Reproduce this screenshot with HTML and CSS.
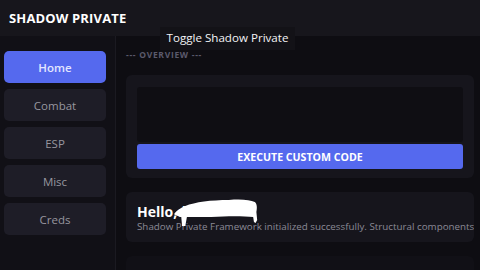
FILE: index.html
```html
<!DOCTYPE html>
<html>
  <head>
    <title>Shadow Private</title>
    <link rel="stylesheet" href="styles.css">
  </head>
  <body>
    <header class="topbar">
      <span class="brand">SHADOW PRIVATE</span>
    </header>
    <div class="tooltip">Toggle Shadow Private</div>
    <div class="layout">
      <nav class="sidebar">
        <button class="tab active">Home</button>
        <button class="tab">Combat</button>
        <button class="tab">ESP</button>
        <button class="tab">Misc</button>
        <button class="tab">Creds</button>
      </nav>
      <main class="content">
        <div class="section-label">--- OVERVIEW ---</div>
        <section class="card">
          <textarea class="code" spellcheck="false"></textarea>
          <button class="exec">EXECUTE CUSTOM CODE</button>
        </section>
        <section class="card welcome">
          <h3 class="hello">Hello,d</h3>
          <p class="sub">Shadow Private Framework initialized successfully. Structural components</p>
          <svg class="redact" width="84" height="30" viewBox="0 0 104 30" preserveAspectRatio="none">
            <path d="M1 15 C4 12 8 10 14 8 C26 4 46 2 68 2 C84 1 94 2 100 4 C103 6 103 10 102 14 L103 22 L101 25 L99 24 L98 19 C86 18 66 18 46 19 L16 19 L14 28 L10 28 L9 19 C6 18 3 18 2 17 C0 17 0 16 1 15 Z" fill="#fff"/>
          </svg>
        </section>
        <section class="card filler"></section>
      </main>
    </div>
  </body>
</html>
```
FILE: styles.css
```css
html, body {
  margin: 0;
  height: 100%;
  overflow: hidden;
}
body {
  font-family: 'Open Sans', sans-serif;
  background: #0e0d12;
  color: #fff;
  position: relative;
}
.topbar {
  height: 36px;
  background: #17161c;
  display: flex;
  align-items: center;
  padding: 0 9px;
  box-sizing: border-box;
}
.brand {
  font-weight: 700;
  font-size: 13px;
  letter-spacing: 0.15px;
}
.tooltip {
  position: absolute;
  left: 160px;
  top: 27px;
  width: 135px;
  height: 23px;
  background: #131217;
  font-size: 11.6px;
  line-height: 22px;
  text-align: center;
  color: #f2f2f5;
}
.layout {
  display: flex;
  height: calc(100% - 36px);
}
.sidebar {
  width: 116px;
  background: #111016;
  border-right: 1px solid #1b1a21;
  padding: 15px 9px 0 4px;
  box-sizing: border-box;
  display: flex;
  flex-direction: column;
  gap: 6px;
  flex-shrink: 0;
}
.tab {
  height: 32px;
  border: none;
  border-radius: 5px;
  background: #1e1d27;
  color: #97969f;
  font-family: 'Open Sans', sans-serif;
  font-size: 11.5px;
}
.tab.active {
  background: #5569ee;
  color: #e3e6ff;
  font-weight: 600;
}
.content {
  flex: 1;
  padding: 13px 6px 0 10px;
  min-width: 0;
}
.section-label {
  font-size: 8.5px;
  font-weight: 700;
  letter-spacing: 0.7px;
  color: #5b5a6c;
  height: 18px;
  margin-bottom: 8px;
}
.card {
  background: #16151c;
  border-radius: 6px;
  padding: 12px 11px 9px;
  margin-bottom: 14px;
  overflow: hidden;
  position: relative;
}
.code {
  display: block;
  width: 100%;
  height: 55px;
  box-sizing: border-box;
  background: #0f0e13;
  border: none;
  border-radius: 3px;
  resize: none;
  margin: 0 0 2px;
}
.exec {
  display: block;
  width: 100%;
  height: 25px;
  border: none;
  border-radius: 3px;
  background: #5569ee;
  color: #fff;
  font-family: 'Open Sans', sans-serif;
  font-weight: 700;
  font-size: 10.6px;
}
.welcome {
  padding: 11px 0 8px 11px;
}
.hello {
  margin: 0;
  font-size: 14px;
  font-weight: 700;
  line-height: 17px;
}
.sub {
  margin: 0;
  font-size: 9.8px;
  color: #8b8a96;
  white-space: nowrap;
  line-height: 14px;
}
.redact {
  position: absolute;
  left: 48px;
  top: 6px;
}
.filler {
  height: 40px;
  background: #111016;
}
```
